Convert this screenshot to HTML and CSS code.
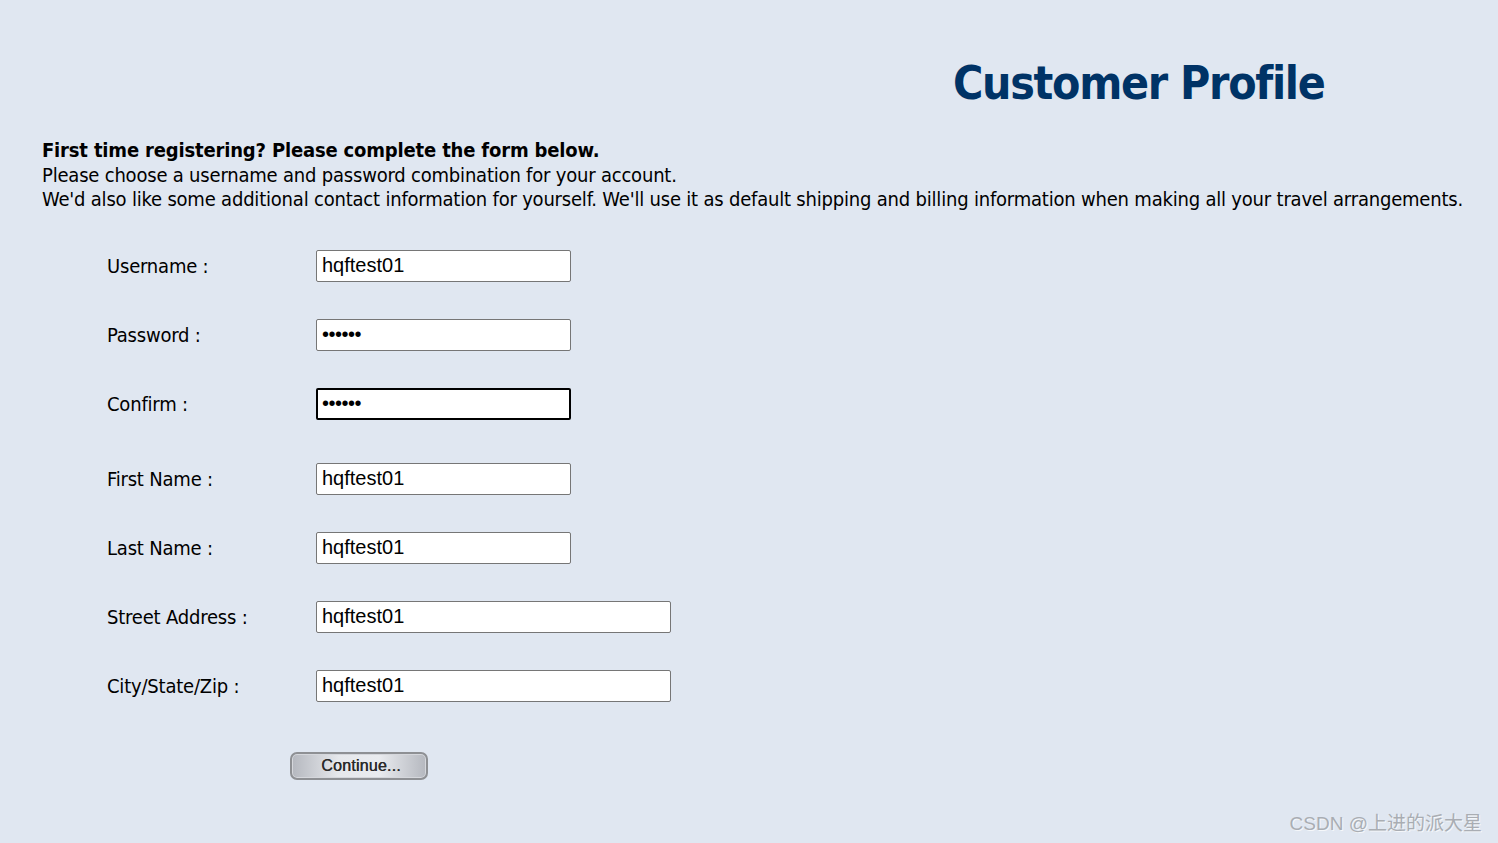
FILE: index.html
```html
<!DOCTYPE html>
<html>
<head>
<meta charset="utf-8">
<link rel="stylesheet" href="styles.css">
</head>
<body>
<div class="page">
  <div class="header"><h1 class="title">Customer Profile</h1></div>
  <div class="intro">
    <div class="lead">First time registering? Please complete the form below.</div>
    <div>Please choose a username and password combination for your account.</div>
    <div>We'd also like some additional contact information for yourself. We'll use it as default shipping and billing information when making all your travel arrangements.</div>
  </div>
  <form class="form">
    <div class="row"><label class="lbl">Username :</label><input class="field" type="text" value="hqftest01"></div>
    <div class="row"><label class="lbl">Password :</label><input class="field" type="password" value="hqftes"></div>
    <div class="row"><label class="lbl">Confirm :</label><input class="field focus" type="password" value="hqftes"></div>
    <div class="row gap-top"><label class="lbl">First Name :</label><input class="field" type="text" value="hqftest01"></div>
    <div class="row"><label class="lbl">Last Name :</label><input class="field" type="text" value="hqftest01"></div>
    <div class="row"><label class="lbl">Street Address :</label><input class="field wide" type="text" value="hqftest01"></div>
    <div class="row"><label class="lbl">City/State/Zip :</label><input class="field wide" type="text" value="hqftest01"></div>
    <div class="actions"><button type="button" class="btn">Continue...</button></div>
  </form>
</div>
<div class="watermark">CSDN @上进的派大星</div>
</body>
</html>
```
FILE: styles.css
```css
html, body {
  margin: 0;
  padding: 0;
  background: #e0e7f1;
  height: 100%;
  overflow: hidden;
}
body {
  font-family: "DejaVu Sans Condensed", "DejaVu Sans", sans-serif;
  color: #000;
  position: relative;
}
.page {
  padding: 0 0 0 42px;
}
.header {
  display: flex;
  padding-left: 911px;
  padding-top: 55px;
  height: 84px;
  box-sizing: border-box;
}
.title {
  margin: 0;
  font-size: 46px;
  font-weight: bold;
  color: #003366;
  line-height: 56px;
  letter-spacing: -1.3px;
}
.intro {
  margin-top: 54px;
  font-size: 20px;
  line-height: 24.5px;
  letter-spacing: -0.2px;
}
.lead {
  font-weight: bold;
  letter-spacing: -0.17px;
}
.form {
  margin: 38px 0 0 65px;
  display: flex;
  flex-direction: column;
  gap: 37px;
}
.row {
  display: flex;
  align-items: center;
  height: 32px;
}
.row.gap-top {
  margin-top: 6px;
}
.lbl {
  width: 209px;
  font-size: 20px;
  letter-spacing: -0.2px;
  color: #000;
}
.field {
  box-sizing: border-box;
  width: 255px;
  height: 32px;
  margin: 0;
  padding: 0 5px;
  border: 1px solid #767676;
  border-radius: 2px;
  background: #fff;
  font-family: "Liberation Sans", Arial, sans-serif;
  font-size: 20px;
  color: #000;
  outline: none;
}
.field[type="password"] {
  font-size: 20px;
  letter-spacing: -0.5px;
}
.field.focus {
  border: 2px solid #000;
  padding: 0 4px;
}
.field.wide {
  width: 355px;
}
.actions {
  padding-left: 183px;
  margin-top: 13px;
}
.btn {
  width: 138px;
  height: 28px;
  border: 2px solid #8e9094;
  border-radius: 7px;
  background: linear-gradient(to right, #b5b8bf 0%, #e6e8ec 35%, #e9ebef 65%, #b5b8bf 100%);
  font-family: "Liberation Sans", Arial, sans-serif;
  font-size: 16px;
  color: #2a2a2a;
  text-shadow: 0.4px 0 0 #2a2a2a;
  letter-spacing: 0.2px;
  padding: 0 0 0 4px;
  box-shadow: inset 0 0 0 1px #d5d7dc;
}
.watermark {
  position: absolute;
  right: 16px;
  bottom: 8px;
  font-family: "Liberation Sans", "Noto Sans CJK SC", sans-serif;
  font-size: 19px;
  color: #a9adb3;
  text-shadow: 1px 1px 0 #f5f7fa;
}
```
